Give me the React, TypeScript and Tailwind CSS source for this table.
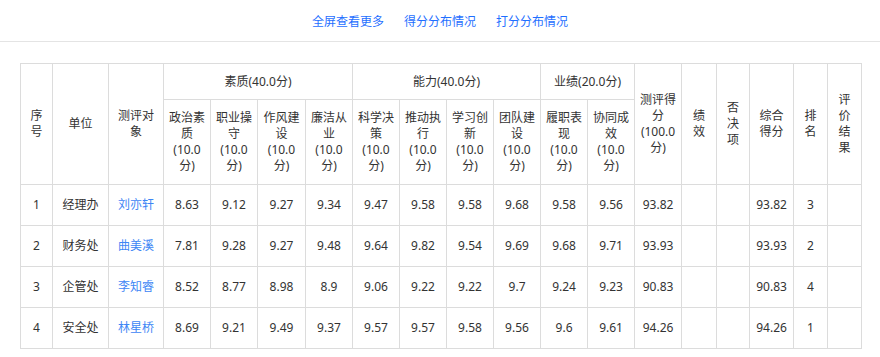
import React from "react";

type Row = {
  no: number;
  unit: string;
  name: string;
  scores: string[];
  total: string;
  rank: number;
};

const rows: Row[] = [
  { no: 1, unit: "经理办", name: "刘亦轩", scores: ["8.63", "9.12", "9.27", "9.34", "9.47", "9.58", "9.58", "9.68", "9.58", "9.56"], total: "93.82", rank: 3 },
  { no: 2, unit: "财务处", name: "曲美溪", scores: ["7.81", "9.28", "9.27", "9.48", "9.64", "9.82", "9.54", "9.69", "9.68", "9.71"], total: "93.93", rank: 2 },
  { no: 3, unit: "企管处", name: "李知睿", scores: ["8.52", "8.77", "8.98", "8.9", "9.06", "9.22", "9.22", "9.7", "9.24", "9.23"], total: "90.83", rank: 4 },
  { no: 4, unit: "安全处", name: "林星桥", scores: ["8.69", "9.21", "9.49", "9.37", "9.57", "9.57", "9.58", "9.56", "9.6", "9.61"], total: "94.26", rank: 1 },
];

const subHeads = ["政治素质", "职业操守", "作风建设", "廉洁从业", "科学决策", "推动执行", "学习创新", "团队建设", "履职表现", "协同成效"];

const colWidths = [32, 56, 55, 47, 47, 48, 47, 47, 47, 47, 47, 47, 47, 47, 35, 33, 44, 34, 34];

const cell = "border border-[#dcdcdc] text-center align-middle font-normal";

const App = () => {
  return (
    <div className="min-h-screen bg-white text-[12px] leading-[16px] text-[#333]" style={{ fontFamily: '"Noto Sans", "Noto Sans CJK SC", sans-serif' }}>
      {/* 顶部链接 */}
      <div className="h-[42px] border-b border-[#e4e4e4] flex items-center justify-center gap-[20px] pt-[3px]">
        <a href="#" className="text-[#1f6fff]">全屏查看更多</a>
        <a href="#" className="text-[#1f6fff]">得分分布情况</a>
        <a href="#" className="text-[#1f6fff]">打分分布情况</a>
      </div>

      {/* 表格 */}
      <div className="pl-[20px] pt-[21px]">
        <table className="table-fixed border-collapse w-[842px]">
          <colgroup>
            {colWidths.map((w, i) => (
              <col key={i} style={{ width: w }} />
            ))}
          </colgroup>
          <thead>
            <tr className="h-[36px]">
              <th rowSpan={2} className={`${cell} px-[6px]`}>序号</th>
              <th rowSpan={2} className={`${cell} px-1`}>单位</th>
              <th rowSpan={2} className={`${cell} px-2`}>测评对象</th>
              <th colSpan={4} className={cell}>素质(40.0分)</th>
              <th colSpan={4} className={cell}>能力(40.0分)</th>
              <th colSpan={2} className={cell}>业绩(20.0分)</th>
              <th rowSpan={2} className={`${cell} px-1`}>测评得分(100.0分)</th>
              <th rowSpan={2} className={`${cell} px-[6px]`}>绩效</th>
              <th rowSpan={2} className={`${cell} px-[6px]`}>否决项</th>
              <th rowSpan={2} className={`${cell} px-[8px]`}>综合得分</th>
              <th rowSpan={2} className={`${cell} px-[6px]`}>排名</th>
              <th rowSpan={2} className={`${cell} px-[6px]`}>评价结果</th>
            </tr>
            <tr className="h-[85px]">
              {subHeads.map((h) => (
                <th key={h} className={`${cell} px-1`}>
                  {h}(10.0分)
                </th>
              ))}
            </tr>
          </thead>
          <tbody>
            {rows.map((r) => (
              <tr key={r.no} className="h-[41px]">
                <td className={cell}>{r.no}</td>
                <td className={cell}>{r.unit}</td>
                <td className={`${cell} text-[#3d86f5]`}>{r.name}</td>
                {r.scores.map((s, i) => (
                  <td key={i} className={cell}>{s}</td>
                ))}
                <td className={cell}>{r.total}</td>
                <td className={cell}></td>
                <td className={cell}></td>
                <td className={cell}>{r.total}</td>
                <td className={cell}>{r.rank}</td>
                <td className={cell}></td>
              </tr>
            ))}
          </tbody>
        </table>
      </div>
    </div>
  );
};

export default App;
